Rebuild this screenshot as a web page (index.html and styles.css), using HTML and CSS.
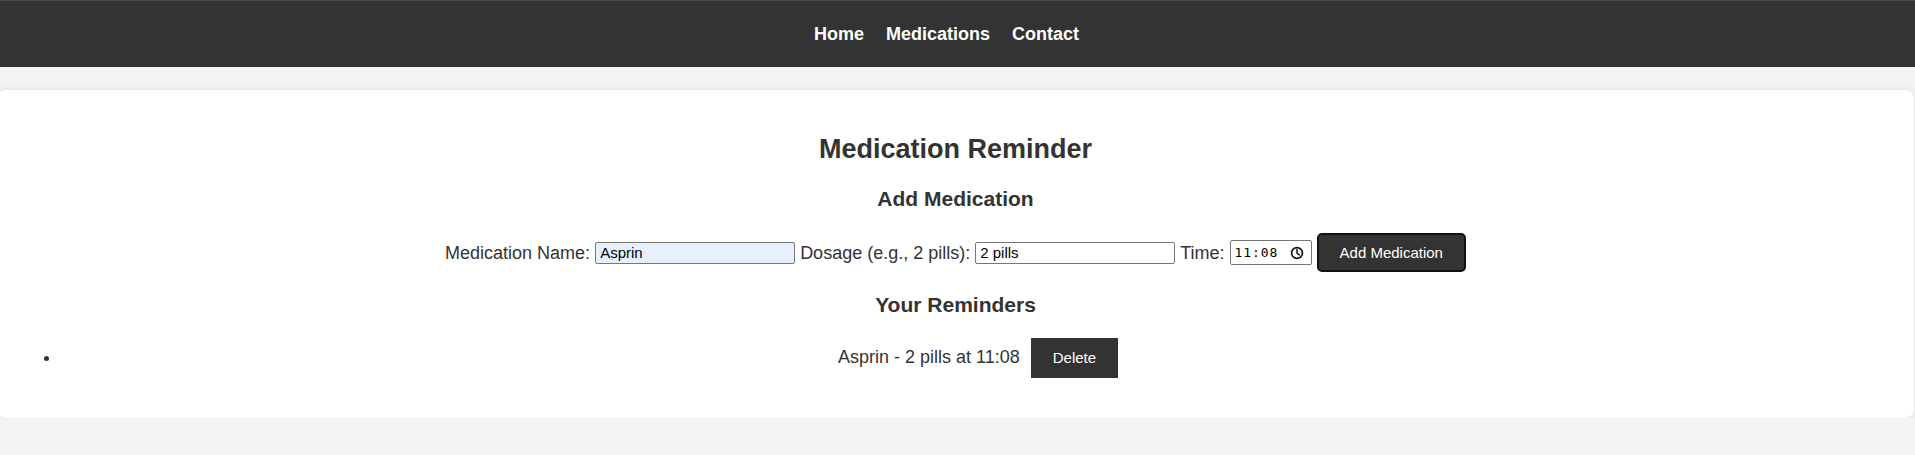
FILE: index.html
```html
<!DOCTYPE html>
<html lang="en">
<head>
<meta charset="utf-8">
<title>Medication Reminder</title>
<link rel="stylesheet" href="styles.css">
</head>
<body>
<header class="site-header">
  <nav class="nav">
    <a href="#" class="nav-link">Home</a>
    <a href="#" class="nav-link">Medications</a>
    <a href="#" class="nav-link">Contact</a>
  </nav>
</header>
<main class="card">
  <h2 class="title">Medication Reminder</h2>
  <h3 class="section-title">Add Medication</h3>
  <form class="med-form">
    <label class="field-label" for="med-name">Medication Name:</label>
    <input class="text-input autofilled" id="med-name" type="text" value="Asprin">
    <label class="field-label" for="med-dose">Dosage (e.g., 2 pills):</label>
    <input class="text-input" id="med-dose" type="text" value="2 pills">
    <label class="field-label" for="med-time">Time:</label>
    <span class="time-field" id="med-time">
      <span class="time-value">11:08</span>
      <svg class="clock" width="14" height="14" viewBox="0 0 14 14" aria-hidden="true">
        <circle cx="7" cy="7" r="5.4" fill="none" stroke="#111" stroke-width="1.6"/>
        <path d="M7 3.6V7.2L9.4 9" fill="none" stroke="#111" stroke-width="1.5" stroke-linecap="round" stroke-linejoin="round"/>
      </svg>
    </span>
    <button class="btn btn-add" type="button">Add Medication</button>
  </form>
  <h3 class="section-title">Your Reminders</h3>
  <ul class="reminders">
    <li class="reminder">Asprin - 2 pills at 11:08<button class="btn btn-delete" type="button">Delete</button></li>
  </ul>
</main>
</body>
</html>
```
FILE: styles.css
```css
html, body {
  margin: 0;
  padding: 0;
}

body {
  background: #f4f4f4;
  color: #333;
  font-family: "Liberation Sans", Arial, sans-serif;
  font-size: 18px;
  overflow: hidden;
}

.site-header {
  background: #333;
  border-top: 1px solid #484848;
  padding: 23px 0;
}

.nav {
  display: flex;
  justify-content: center;
  line-height: 20px;
}

.nav-link {
  color: #fff;
  font-weight: bold;
  font-size: 18px;
  text-decoration: none;
  margin-right: 22px;
}

.card {
  background: #fff;
  margin: 23px 1px 0 -3px;
  padding: 22px;
  border-radius: 9px;
  box-shadow: 0 0 11px rgba(0, 0, 0, 0.1);
  text-align: center;
}

.title {
  font-size: 27px;
  line-height: 31px;
  margin: 22px 0 22px;
  color: #333;
}

.section-title {
  font-size: 21px;
  line-height: 24px;
  margin: 21px 0;
  color: #333;
}

.med-form {
  display: flex;
  justify-content: center;
  align-items: center;
  gap: 5px;
  margin: 22px 0 0;
}

.field-label {
  font-size: 18px;
  line-height: 20px;
  color: #333;
}

.text-input {
  box-sizing: border-box;
  width: 200px;
  height: 22px;
  padding: 1px 4px;
  border: 1px solid #767676;
  border-radius: 2px;
  font-family: "Liberation Sans", Arial, sans-serif;
  font-size: 15px;
  color: #000;
  background: #fff;
  outline: none;
}

.text-input.autofilled {
  background: #e8f0fe;
}

.time-field {
  box-sizing: border-box;
  display: flex;
  align-items: center;
  width: 82px;
  height: 25px;
  padding: 0 7px 0 4px;
  border: 1px solid #767676;
  border-radius: 2px;
  background: #fff;
}

.time-value {
  flex: 1;
  text-align: left;
  font-family: "DejaVu Sans Mono", "Liberation Mono", monospace;
  font-size: 13px;
  letter-spacing: 0.9px;
  color: #000;
}

.clock {
  display: block;
}

.btn {
  background: #333;
  color: #fff;
  font-family: "Liberation Sans", Arial, sans-serif;
  font-size: 15px;
  cursor: pointer;
}

.btn-add {
  line-height: 17px;
  padding: 9px 21px;
  border: 2px solid #111;
  border-radius: 5px;
}

.btn-delete {
  line-height: 18px;
  padding: 11px 22px;
  border: none;
  border-radius: 0;
  margin-left: 11px;
}

.reminders {
  margin: 21px -3px 18px 0;
  padding-left: 42px;
}

.reminder {
  font-size: 18px;
  line-height: 20px;
  text-align: center;
}
```
